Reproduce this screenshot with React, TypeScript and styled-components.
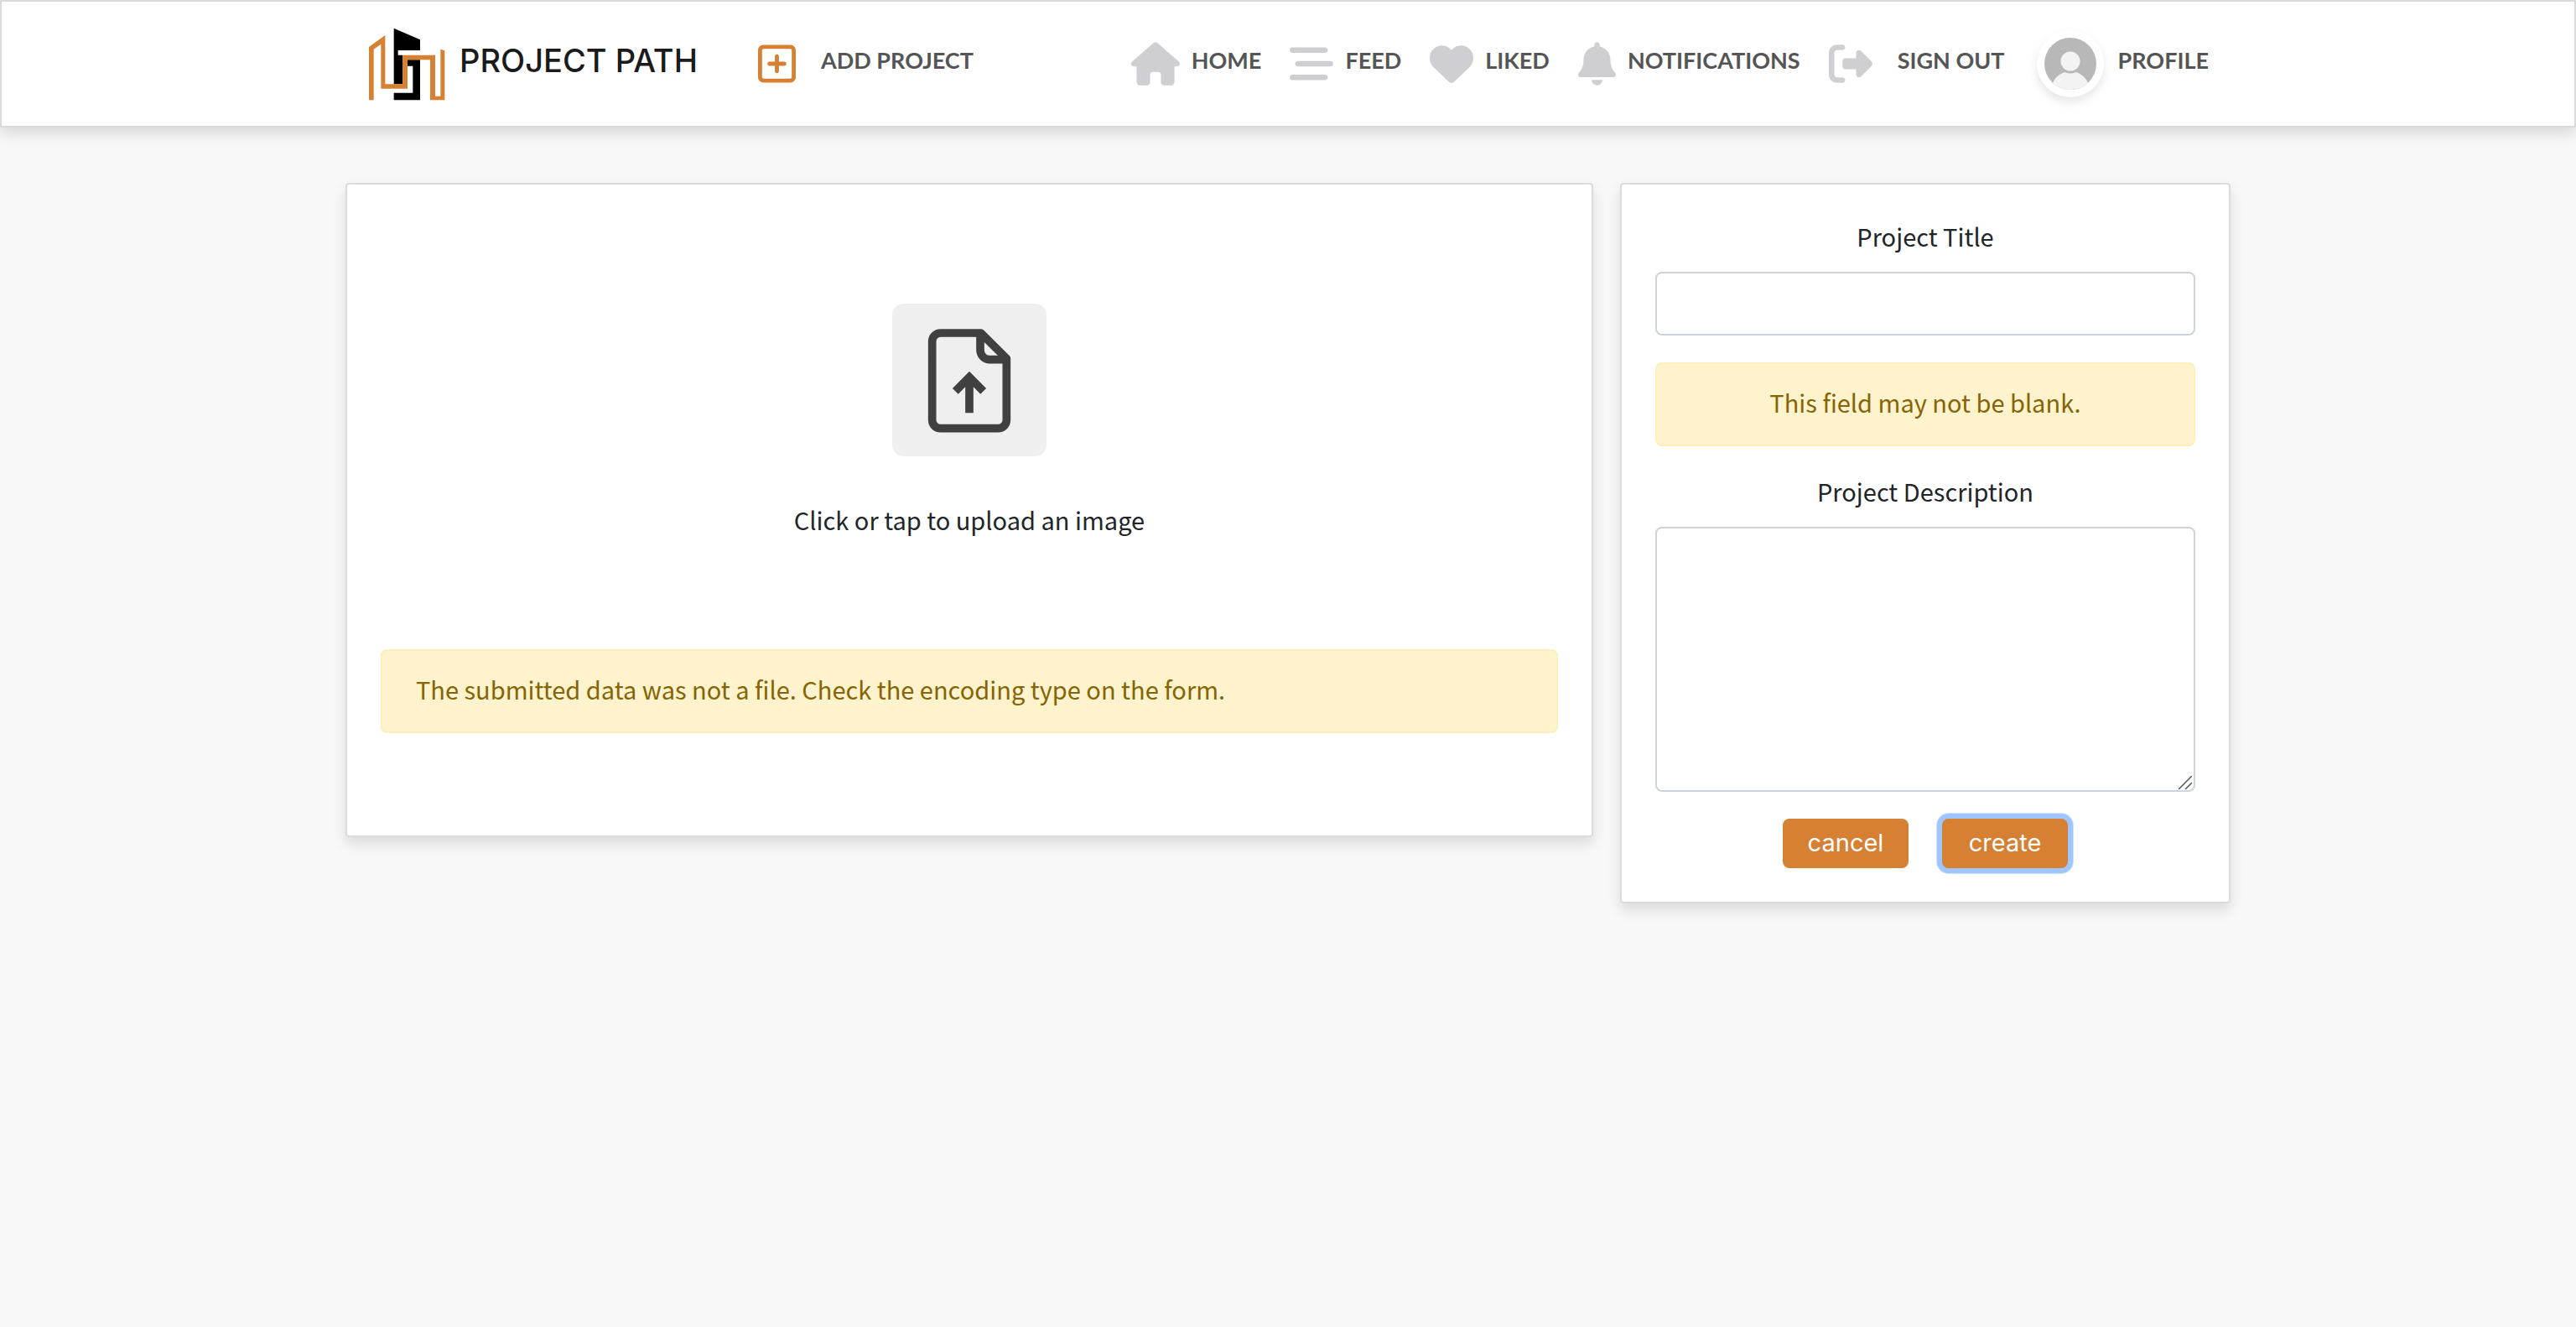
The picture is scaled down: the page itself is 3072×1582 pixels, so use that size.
import React from 'react';
import styled, { createGlobalStyle } from 'styled-components';
import {
  FaRegSquarePlus,
  FaHouse,
  FaBarsStaggered,
  FaHeart,
  FaBell,
  FaRightFromBracket,
} from 'react-icons/fa6';

const color = {
  page: '#f8f8f8',
  surface: '#ffffff',
  line: '#dadadf',
  field: '#ced4da',
  text: '#212529',
  navText: '#555555',
  navIcon: '#cfced3',
  brand: '#d58032',
  focus: '#9fc6ff',
};

const bodyFont = '"Noto Sans CJK JP", "Noto Sans", sans-serif';
const navFont = 'Lato, sans-serif';
const displayFont = 'Inter, sans-serif';
const lift = '0 8px 16px rgba(0, 0, 0, 0.12)';

const GlobalStyle = createGlobalStyle`
  *, *::before, *::after { box-sizing: border-box; }
  body {
    margin: 0;
    background: ${color.page};
    color: ${color.text};
    font: 400 29px/42px ${bodyFont};
  }
`;

const NavBar = styled.header`
  background: ${color.surface};
  border: 2px solid ${color.line};
  box-shadow: ${lift};
`;

const NavInner = styled.div`
  display: flex;
  align-items: center;
  justify-content: space-between;
  max-width: 2280px;
  min-height: 148px;
  margin: 0 auto;
  padding: 0 42px;
`;

const NavGroup = styled.nav`
  display: flex;
  align-items: center;
  gap: 34px;
`;

const Brand = styled.a`
  display: flex;
  align-items: center;
  gap: 17px;
  margin-right: 38px;
  color: #1b1b1b;
  font: 500 38px/48px ${displayFont};
  text-decoration: none;
`;

const NavLink = styled.a<{ $gap?: number }>`
  display: flex;
  align-items: center;
  gap: ${({ $gap = 14 }) => $gap}px;
  color: ${color.navText};
  font: 700 27px/32px ${navFont};
  text-decoration: none;
`;

const NavIcon = styled.span<{ $width?: number; $accent?: boolean }>`
  display: flex;
  color: ${({ $accent }) => ($accent ? color.brand : color.navIcon)};

  > svg {
    width: ${({ $width = 52 }) => $width}px;
    height: 52px;
  }
`;

const NavLabel = styled.span`
  padding-bottom: 8px;
`;

const Avatar = styled.span`
  display: grid;
  place-items: center;
  width: 80px;
  height: 80px;
  margin-left: 4px;
  border-radius: 50%;
  background: ${color.surface};
  box-shadow: 0 6px 12px rgba(0, 0, 0, 0.1);
`;

const Page = styled.main`
  padding: 66px 16px;
`;

const Form = styled.form`
  display: grid;
  grid-template-columns: repeat(12, minmax(0, 1fr));
  gap: 32px;
  align-items: start;
  max-width: 2248px;
  margin: 0 auto;
`;

const Card = styled.section<{ $span: number }>`
  grid-column: span ${({ $span }) => $span};
  display: flex;
  flex-direction: column;
  padding: 40px;
  background: ${color.surface};
  border: 2px solid ${color.line};
  border-radius: 4px;
  box-shadow: ${lift};
`;

const UploadLabel = styled.label`
  display: flex;
  flex-direction: column;
  align-items: center;
  gap: 54px;
  padding: 102px 0 134px;
  cursor: pointer;
`;

const UploadTile = styled.span`
  display: flex;
  border-radius: 14px;
  background: #efefef;
`;

const FileInput = styled.input`
  display: none;
`;

const Alert = styled.div<{ $centered?: boolean }>`
  margin-bottom: 32px;
  padding: 24px 40px 30px;
  border: 2px solid #ffeeba;
  border-radius: 8px;
  background: #fff3cd;
  color: #856404;
  text-align: ${({ $centered }) => ($centered ? 'center' : 'left')};
`;

const UploadFooter = styled.div`
  padding-bottom: 50px;
`;

const FieldLabel = styled.label`
  margin-bottom: 22px;
  text-align: center;
`;

const TextInput = styled.input`
  width: 100%;
  height: 76px;
  margin-bottom: 32px;
  padding: 12px 24px;
  border: 2px solid ${color.field};
  border-radius: 8px;
  background: ${color.surface};
  color: inherit;
  font: inherit;
  outline: none;
`;

const AreaWrap = styled.div`
  position: relative;
  display: flex;
  margin-bottom: 32px;
`;

const TextArea = styled.textarea`
  width: 100%;
  height: 316px;
  padding: 12px 24px;
  border: 2px solid ${color.field};
  border-radius: 8px;
  background: ${color.surface};
  color: inherit;
  font: inherit;
  outline: none;
  resize: vertical;

  &::-webkit-resizer {
    display: none;
  }
`;

const Grip = styled.svg`
  position: absolute;
  right: 4px;
  bottom: 3px;
  pointer-events: none;
`;

const Actions = styled.div`
  display: flex;
  justify-content: center;
  gap: 40px;
`;

const Button = styled.button<{ $ring?: boolean }>`
  width: 150px;
  height: 59px;
  padding: 0 0 2px;
  border: 0;
  border-radius: 8px;
  background: ${color.brand};
  box-shadow: ${({ $ring }) => ($ring ? `0 0 0 6px ${color.focus}, 0 0 0 7px #cfe2ff` : 'none')};
  color: #fff;
  font: 400 29px/48px ${displayFont};
  cursor: pointer;
`;

const Logo = () => (
  <svg width="93" height="87" viewBox="24 39 279 261" aria-hidden="true">
    <path d="M119 41 213 82V120H134V137H151V241H119Z" fill="#000" />
    <path d="M168 154H213V298H119V272H187V176H168Z" fill="#000" />
    <path
      d="M30 298V108L88 66V241H151V137H267V284H286V116L301 121V298H249V154H168V257H73V98L47 116V298Z"
      fill={color.brand}
    />
  </svg>
);

const Person = () => (
  <svg width="62" height="62" viewBox="0 0 62 62" aria-hidden="true">
    <defs>
      <clipPath id="face">
        <circle cx="31" cy="31" r="31" />
      </clipPath>
    </defs>
    <g clipPath="url(#face)">
      <rect width="62" height="62" fill="#b8b8b8" />
      <circle cx="31" cy="63" r="23" fill="#f3f3f3" />
      <circle cx="31" cy="28" r="13" fill="#f3f3f3" stroke="#b8b8b8" strokeWidth="3" />
    </g>
  </svg>
);

const UploadIcon = () => (
  <svg width="184" height="182" viewBox="42 36 552 546" fill="none" stroke="#404040" strokeWidth="29" aria-hidden="true">
    <path d="M359 141H215a30 30 0 0 0-30 30V452a30 30 0 0 0 30 30H421a30 30 0 0 0 30-30V232Z" strokeLinejoin="round" />
    <path d="M357 141V202a34 34 0 0 0 34 34H451" />
    <path d="M318 427V304M268 349 318 299 368 349" />
  </svg>
);

const mainLinks = [
  { label: 'HOME', Icon: FaHouse, width: 58 },
  { label: 'FEED', Icon: FaBarsStaggered },
  { label: 'LIKED', Icon: FaHeart },
  { label: 'NOTIFICATIONS', Icon: FaBell, width: 45 },
  { label: 'SIGN OUT', Icon: FaRightFromBracket, gap: 30 },
];

export default function App() {
  return (
    <>
      <GlobalStyle />
      <NavBar>
        <NavInner>
          <NavGroup>
            <Brand href="#home">
              <Logo />
              <NavLabel>PROJECT PATH</NavLabel>
            </Brand>
            <NavLink href="#add" $gap={30}>
              <NavIcon $width={45} $accent>
                <FaRegSquarePlus />
              </NavIcon>
              <NavLabel>ADD PROJECT</NavLabel>
            </NavLink>
          </NavGroup>
          <NavGroup>
            {mainLinks.map(({ label, Icon, gap, width }) => (
              <NavLink key={label} href={`#${label.toLowerCase()}`} $gap={gap}>
                <NavIcon $width={width}>
                  <Icon />
                </NavIcon>
                <NavLabel>{label}</NavLabel>
              </NavLink>
            ))}
            <NavLink href="#profile" $gap={17}>
              <Avatar>
                <Person />
              </Avatar>
              <NavLabel>PROFILE</NavLabel>
            </NavLink>
          </NavGroup>
        </NavInner>
      </NavBar>

      <Page>
        <Form onSubmit={(e) => e.preventDefault()}>
          <Card $span={8}>
            <UploadLabel htmlFor="image">
              <UploadTile>
                <UploadIcon />
              </UploadTile>
              Click or tap to upload an image
            </UploadLabel>
            <FileInput id="image" type="file" accept="image/*" />
            <UploadFooter>
              <Alert role="alert">
                The submitted data was not a file. Check the encoding type on the form.
              </Alert>
            </UploadFooter>
          </Card>

          <Card $span={4}>
            <FieldLabel htmlFor="title">Project Title</FieldLabel>
            <TextInput id="title" type="text" name="title" />
            <Alert role="alert" $centered>
              This field may not be blank.
            </Alert>
            <FieldLabel htmlFor="description">Project Description</FieldLabel>
            <AreaWrap>
              <TextArea id="description" name="description" />
              <Grip width="16" height="16" viewBox="0 0 16 16" stroke="#555" strokeWidth="1.5" aria-hidden="true">
                <path d="M0 16 16 0M8 16 16 8" />
              </Grip>
            </AreaWrap>
            <Actions>
              <Button type="button">cancel</Button>
              <Button type="submit" $ring>
                create
              </Button>
            </Actions>
          </Card>
        </Form>
      </Page>
    </>
  );
}
